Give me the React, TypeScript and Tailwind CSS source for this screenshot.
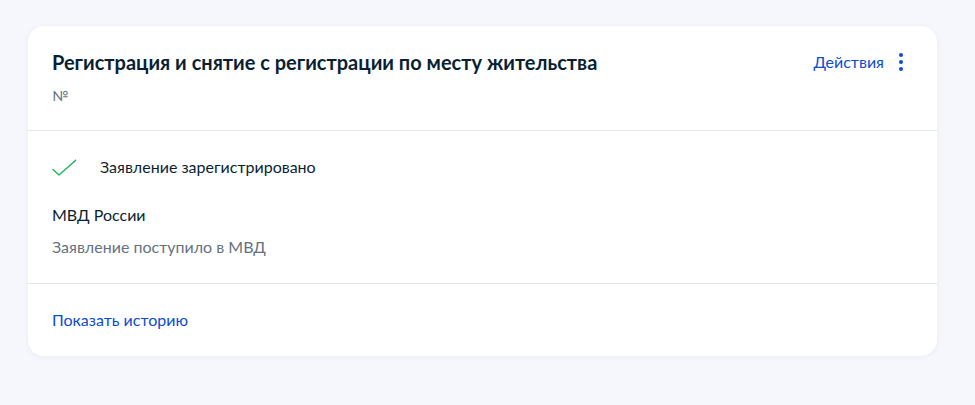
export default function App() {
  return (
    <div className="min-h-screen bg-[#f5f7fc] px-7 pt-[26px] pb-12 font-['Lato','Noto_Sans',sans-serif] text-[#0b1f33]">
      <div className="w-[909px] rounded-2xl bg-white shadow-[0_1px_6px_rgba(11,31,51,0.05)]">
        {/* шапка */}
        <div className="flex items-start justify-between border-b border-[#e3e8ee] px-6 pt-6 pb-6">
          <div>
            <h2 className="text-[20px] font-bold leading-6">
              Регистрация и снятие с регистрации по месту жительства
            </h2>
            <p className="mt-3 text-sm leading-5 text-[#66727f]">№</p>
          </div>
          <div className="flex items-center gap-[5px]">
            <a href="#" className="text-base leading-6 text-[#0d4cd3]">
              Действия
            </a>
            <span className="flex h-6 w-6 flex-col items-center justify-center gap-[3px]">
              <span className="h-1 w-1 rounded-full bg-[#0d4cd3]" />
              <span className="h-1 w-1 rounded-full bg-[#0d4cd3]" />
              <span className="h-1 w-1 rounded-full bg-[#0d4cd3]" />
            </span>
          </div>
        </div>

        {/* статус */}
        <div className="border-b border-[#e3e8ee] px-6 py-6">
          <div className="flex items-center gap-6">
            <svg width="24" height="24" viewBox="0 0 24 24" fill="none">
              <path d="M1 14.5l6 5.5L24 5" stroke="#1ab961" strokeWidth="1.4" strokeLinecap="round" strokeLinejoin="round" />
            </svg>
            <span className="text-base leading-6">Заявление зарегистрировано</span>
          </div>
          <p className="mt-6 text-base leading-6">МВД России</p>
          <p className="mt-2 text-base leading-6 text-[#66727f]">Заявление поступило в МВД</p>
        </div>

        {/* история */}
        <div className="px-6 py-6">
          <a href="#" className="text-base leading-6 text-[#0d4cd3]">
            Показать историю
          </a>
        </div>
      </div>
    </div>
  );
}
